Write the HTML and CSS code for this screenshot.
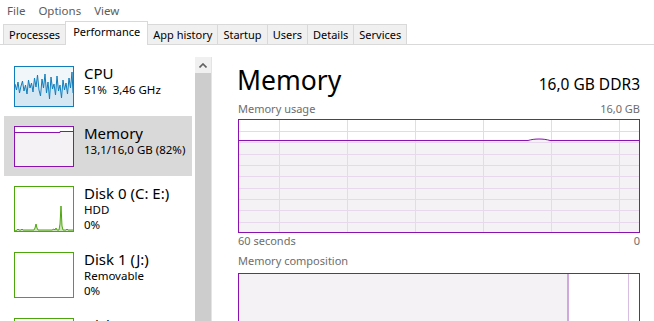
FILE: index.html
```html
<!DOCTYPE html>
<html lang="en">
<head>
    <meta charset="UTF-8">
    <title>Task Manager</title>
    <link rel="stylesheet" href="styles.css">
</head>
<body>
    <div class="menu">
        <span>File</span>
        <span>Options</span>
        <span>View</span>
    </div>

    <div class="tabs">
        <div class="tab">Processes</div>
        <div class="tab active">Performance</div>
        <div class="tab">App history</div>
        <div class="tab">Startup</div>
        <div class="tab">Users</div>
        <div class="tab">Details</div>
        <div class="tab">Services</div>
    </div>

    <div class="main">
        <div class="sidebar">
            <div class="list">
                <div class="item">
                    <svg class="thumb" width="60" height="41" viewBox="0 0 60 41">
                        <rect x="0.5" y="0.5" width="59" height="40" fill="#f1f6fa" stroke="#117dbb"/>
                        <polygon fill="#d5e7f3" points="1,40 1,18 2.5,24 4,16 5.5,27 7,20 8.5,15 10,25 11.5,19 13,28 14.5,14 16,22 17.5,17 19,26 20.5,12 22,21 23.5,9 25,24 26.5,30 28,13 29.5,22 31,8 32.5,27 34,16 35.5,33 37,11 38.5,23 40,18 41.5,29 43,10 44.5,25 46,19 47.5,32 49,14 50.5,24 52,17 53.5,28 55,12 56.5,22 58,6 59,27 59,40"/>
                        <polyline fill="none" stroke="#117dbb" stroke-width="1" points="1,18 2.5,24 4,16 5.5,27 7,20 8.5,15 10,25 11.5,19 13,28 14.5,14 16,22 17.5,17 19,26 20.5,12 22,21 23.5,9 25,24 26.5,30 28,13 29.5,22 31,8 32.5,27 34,16 35.5,33 37,11 38.5,23 40,18 41.5,29 43,10 44.5,25 46,19 47.5,32 49,14 50.5,24 52,17 53.5,28 55,12 56.5,22 58,6 59,27"/>
                    </svg>
                    <div class="info">
                        <div class="name">CPU</div>
                        <div class="sub">51%&nbsp; 3,46 GHz</div>
                    </div>
                </div>

                <div class="item selected">
                    <svg class="thumb" width="60" height="41" viewBox="0 0 60 41">
                        <rect x="0.5" y="0.5" width="59" height="40" fill="#fff" stroke="#8b12ae"/>
                        <path d="M1 6.5 H46 V5.5 H59 V40 H1 Z" fill="#f4f2f5"/>
                        <path d="M1 6.5 H46 V5.5 H59" fill="none" stroke="#8b12ae"/>
                    </svg>
                    <div class="info">
                        <div class="name">Memory</div>
                        <div class="sub">13,1/16,0 GB (82%)</div>
                    </div>
                </div>

                <div class="item disk">
                    <svg class="thumb" width="60" height="46" viewBox="0 0 60 46">
                        <rect x="0.5" y="0.5" width="59" height="45" fill="#fff" stroke="#4da60c"/>
                        <polygon fill="#cde6bb" points="1,45 3,44 4,43 5,44 7,44 8,43 9,44 12,44 14,44 20,44 21,42 22,38 23,42 24,44 30,44 38,44 40,43 41,44 42,42 43,44 45,44 46,38 47,20 48,40 49,44 52,44 53,43 54,44 59,44 59,45"/>
                        <polyline fill="none" stroke="#4da60c" points="1,45 3,44 4,43 5,44 7,44 8,43 9,44 12,44 14,44 20,44 21,42 22,38 23,42 24,44 30,44 38,44 40,43 41,44 42,42 43,44 45,44 46,38 47,20 48,40 49,44 52,44 53,43 54,44 59,44"/>
                    </svg>
                    <div class="info">
                        <div class="name">Disk 0 (C: E:)</div>
                        <div class="sub">HDD</div>
                        <div class="sub">0%</div>
                    </div>
                </div>

                <div class="item disk">
                    <svg class="thumb" width="60" height="46" viewBox="0 0 60 46">
                        <rect x="0.5" y="0.5" width="59" height="45" fill="#fff" stroke="#4da60c"/>
                    </svg>
                    <div class="info">
                        <div class="name">Disk 1 (J:)</div>
                        <div class="sub">Removable</div>
                        <div class="sub">0%</div>
                    </div>
                </div>

                <div class="item disk">
                    <svg class="thumb" width="60" height="46" viewBox="0 0 60 46">
                        <rect x="0.5" y="0.5" width="59" height="45" fill="#fff" stroke="#4da60c"/>
                    </svg>
                    <div class="info">
                        <div class="name">Disk 2 (K:)</div>
                        <div class="sub">Removable</div>
                        <div class="sub">0%</div>
                    </div>
                </div>
            </div>

            <div class="scroll">
                <div class="up">
                    <svg width="8" height="5" viewBox="0 0 8 5">
                        <path d="M0.5 4.5 L4 1 L7.5 4.5" fill="none" stroke="#606060" stroke-width="1.6"/>
                    </svg>
                </div>
                <div class="bar"></div>
            </div>
        </div>

        <div class="detail">
            <div class="head">
                <div class="title">Memory</div>
                <div class="spec">16,0 GB DDR3</div>
            </div>

            <div class="label">
                <span>Memory usage</span>
                <span>16,0 GB</span>
            </div>

            <svg class="chart" width="402" height="114" viewBox="0 0 402 114">
                <rect x="0" y="0" width="402" height="114" fill="#fff"/>
                <path d="M1 21.5 H290 C296 19.5 306 19.5 312 21.5 H401 V113 H1 Z" fill="#f4f2f5"/>
                <g stroke="#e8d8ee" stroke-width="1" shape-rendering="crispEdges">
                    <line x1="1" y1="12.5" x2="401" y2="12.5"/>
                    <line x1="1" y1="23.5" x2="401" y2="23.5"/>
                    <line x1="1" y1="35.5" x2="401" y2="35.5"/>
                    <line x1="1" y1="46.5" x2="401" y2="46.5"/>
                    <line x1="1" y1="57.5" x2="401" y2="57.5"/>
                    <line x1="1" y1="69.5" x2="401" y2="69.5"/>
                    <line x1="1" y1="80.5" x2="401" y2="80.5"/>
                    <line x1="1" y1="91.5" x2="401" y2="91.5"/>
                    <line x1="1" y1="103.5" x2="401" y2="103.5"/>
                    <line x1="41.5" y1="1" x2="41.5" y2="113"/>
                    <line x1="109.5" y1="1" x2="109.5" y2="113"/>
                    <line x1="177.5" y1="1" x2="177.5" y2="113"/>
                    <line x1="245.5" y1="1" x2="245.5" y2="113"/>
                    <line x1="313.5" y1="1" x2="313.5" y2="113"/>
                    <line x1="381.5" y1="1" x2="381.5" y2="113"/>
                </g>
                <path d="M1 21.5 H290 C296 19.5 306 19.5 312 21.5 H401" fill="none" stroke="#8b12ae"/>
                <rect x="0.5" y="0.5" width="401" height="113" fill="none" stroke="#8b12ae"/>
            </svg>

            <div class="label axis">
                <span>60 seconds</span>
                <span>0</span>
            </div>

            <div class="label section">
                <span>Memory composition</span>
            </div>

            <div class="composition">
                <div class="part in-use" style="width: 330px"></div>
                <div class="part standby" style="width: 60px"></div>
                <div class="part free"></div>
            </div>
        </div>
    </div>
</body>
</html>
```

FILE: styles.css
```css
body {
    margin: 0;
    width: 654px;
    height: 321px;
    overflow: hidden;
    background-color: white;
    font-family: "Noto Sans", "Open Sans", sans-serif;
    color: #000;
}

.menu {
    display: flex;
    height: 21px;
    align-items: center;
    padding-left: 1px;
    font-size: 11.5px;
    color: #5c5c5c;
}

.menu span {
    padding: 0 7px 0 6px;
    line-height: 17px;
}

.tabs {
    display: flex;
    align-items: flex-end;
    height: 23px;
    padding-left: 3px;
    border-bottom: 1px solid #d9d9d9;
    font-size: 11px;
}

.tab {
    height: 20px;
    box-sizing: border-box;
    padding: 0 5px;
    line-height: 19px;
    background-color: #f0f0f0;
    border: 1px solid #d9d9d9;
    border-bottom: none;
    margin-left: -1px;
}

.tab:first-child {
    margin-left: 0;
}

.tab.active {
    position: relative;
    height: 24px;
    margin-bottom: -1px;
    padding: 0 7px 4px;
    background-color: white;
}

.main {
    display: flex;
}

.sidebar {
    display: flex;
    padding-top: 11px;
}

.list {
    width: 188px;
    margin-left: 4px;
}

.item {
    display: flex;
    gap: 10px;
    padding: 10px 0 9px 10px;
}

.item.disk {
    padding-bottom: 10px;
}

.item.selected {
    background-color: #d9d9d9;
}

.thumb {
    display: block;
    flex: none;
}

.info {
    margin-top: -2px;
}

.name {
    font-size: 15px;
    line-height: 18px;
}

.sub {
    font-size: 11.5px;
    line-height: 15px;
}

.scroll {
    display: flex;
    flex-direction: column;
    width: 16px;
    margin-left: 3px;
    margin-top: 1px;
    border-right: 1px solid #e4e4e4;
}

.up {
    display: flex;
    align-items: center;
    justify-content: center;
    height: 16px;
    background-color: #f0f0f0;
}

.bar {
    height: 260px;
    background-color: #cdcdcd;
}

.detail {
    width: 402px;
    margin-left: 26px;
    padding-top: 18px;
}

.head {
    display: flex;
    justify-content: space-between;
    align-items: baseline;
}

.title {
    font-size: 26.5px;
    line-height: 34px;
    margin-left: -1px;
}

.spec {
    font-size: 15.5px;
}

.label {
    display: flex;
    justify-content: space-between;
    margin-top: 5px;
    font-size: 11px;
    line-height: 14px;
    color: #6d6d6d;
}

.chart {
    display: block;
    margin-top: 3px;
}

.label.axis {
    margin-top: 1px;
}

.label.section {
    margin-top: 6px;
}

.composition {
    display: flex;
    height: 60px;
    margin-top: 5px;
    border: 1px solid #8b12ae;
}

.part {
    box-sizing: border-box;
}

.in-use {
    background-color: #f4f2f5;
    border-right: 2px solid #cfa8dc;
}

.standby {
    border-right: 1px solid #d9bce3;
}

.free {
    flex: 1;
}
```
